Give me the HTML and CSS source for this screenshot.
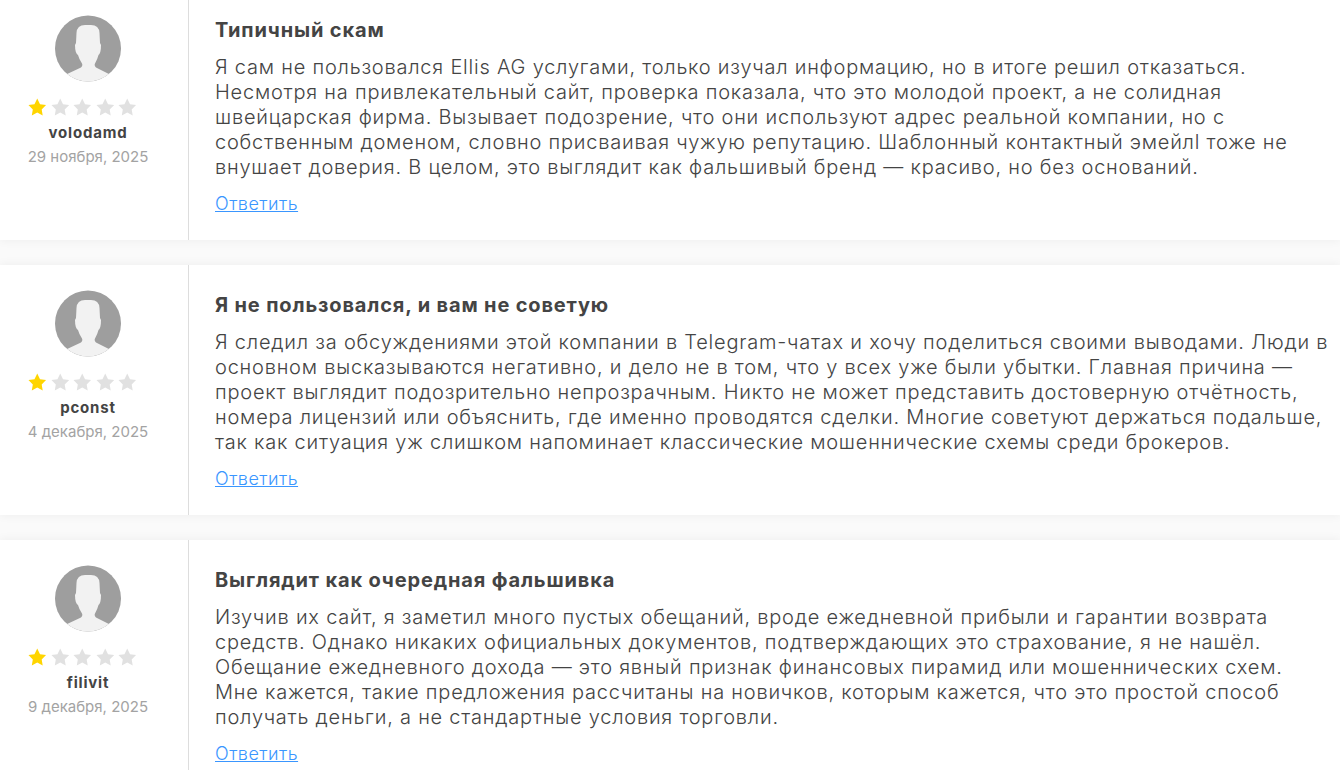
FILE: index.html
```html
<!DOCTYPE html>
<html lang="ru">
<head>
  <meta charset="UTF-8">
  <title>Отзывы</title>
  <link rel="stylesheet" href="styles.css">
</head>
<body>
  <svg class="svg-defs">
    <symbol id="avatar-shape" viewBox="0 0 66 67">
      <circle cx="33" cy="33.500" r="33" fill="#9e9e9e"/>
      <path fill="#f2f2f2" d="M12.100 59 L26 52.500 Q28 51 27 48.500 Q24 44 23 40 Q20 38 20 30 L21 28 L21.500 18 Q22 10 30 10 L36 10 Q44 10 44.500 18 L45 28 L46 30 Q46 38 43.500 40 Q42.500 44 40 48.500 Q39 51 41 52.500 L53.900 59 A33 33 0 0 1 12.100 59z"/>
    </symbol>
    <symbol id="star-shape" viewBox="0 0 20 20">
      <path d="M10 .5l3 6.300 6.500.9-4.700 4.600 1.100 6.700-5.900-3.200-5.900 3.200 1.100-6.700L.5 7.700 7 6.800z"/>
    </symbol>
  </svg>

  <section class="review">
    <div class="review-author">
      <svg class="avatar"><use href="#avatar-shape"/></svg>
      <div class="stars">
        <svg class="star star-on"><use href="#star-shape"/></svg>
        <svg class="star"><use href="#star-shape"/></svg>
        <svg class="star"><use href="#star-shape"/></svg>
        <svg class="star"><use href="#star-shape"/></svg>
        <svg class="star"><use href="#star-shape"/></svg>
      </div>
      <div class="author-name">volodamd</div>
      <div class="review-date">29 ноября, 2025</div>
    </div>
    <div class="review-body">
      <h3>Типичный скам</h3>
      <p>Я сам не пользовался Ellis AG услугами, только изучал информацию, но в итоге решил отказаться.<br>Несмотря на привлекательный сайт, проверка показала, что это молодой проект, а не солидная<br>швейцарская фирма. Вызывает подозрение, что они используют адрес реальной компании, но с<br>собственным доменом, словно присваивая чужую репутацию. Шаблонный контактный эмейлl тоже не<br>внушает доверия. В целом, это выглядит как фальшивый бренд — красиво, но без оснований.</p>
      <a href="#">Ответить</a>
    </div>
  </section>

  <section class="review">
    <div class="review-author">
      <svg class="avatar"><use href="#avatar-shape"/></svg>
      <div class="stars">
        <svg class="star star-on"><use href="#star-shape"/></svg>
        <svg class="star"><use href="#star-shape"/></svg>
        <svg class="star"><use href="#star-shape"/></svg>
        <svg class="star"><use href="#star-shape"/></svg>
        <svg class="star"><use href="#star-shape"/></svg>
      </div>
      <div class="author-name">pconst</div>
      <div class="review-date">4 декабря, 2025</div>
    </div>
    <div class="review-body">
      <h3>Я не пользовался, и вам не советую</h3>
      <p>Я следил за обсуждениями этой компании в Telegram-чатах и хочу поделиться своими выводами. Люди в<br>основном высказываются негативно, и дело не в том, что у всех уже были убытки. Главная причина —<br>проект выглядит подозрительно непрозрачным. Никто не может представить достоверную отчётность,<br>номера лицензий или объяснить, где именно проводятся сделки. Многие советуют держаться подальше,<br>так как ситуация уж слишком напоминает классические мошеннические схемы среди брокеров.</p>
      <a href="#">Ответить</a>
    </div>
  </section>

  <section class="review">
    <div class="review-author">
      <svg class="avatar"><use href="#avatar-shape"/></svg>
      <div class="stars">
        <svg class="star star-on"><use href="#star-shape"/></svg>
        <svg class="star"><use href="#star-shape"/></svg>
        <svg class="star"><use href="#star-shape"/></svg>
        <svg class="star"><use href="#star-shape"/></svg>
        <svg class="star"><use href="#star-shape"/></svg>
      </div>
      <div class="author-name">filivit</div>
      <div class="review-date">9 декабря, 2025</div>
    </div>
    <div class="review-body">
      <h3>Выглядит как очередная фальшивка</h3>
      <p>Изучив их сайт, я заметил много пустых обещаний, вроде ежедневной прибыли и гарантии возврата<br>средств. Однако никаких официальных документов, подтверждающих это страхование, я не нашёл.<br>Обещание ежедневного дохода — это явный признак финансовых пирамид или мошеннических схем.<br>Мне кажется, такие предложения рассчитаны на новичков, которым кажется, что это простой способ<br>получать деньги, а не стандартные условия торговли.</p>
      <a href="#">Ответить</a>
    </div>
  </section>
</body>
</html>
```

FILE: styles.css
```css
* {
  margin: 0;
  padding: 0;
  box-sizing: border-box;
}

html, body {
  height: 770px;
  overflow: hidden;
}

body {
  font-family: 'Inter', 'Noto Sans', sans-serif;
  background: #fafafa;
  color: #444;
}

.review {
  display: flex;
  height: 250px;
  margin-bottom: 25px;
  background: #fff;
  box-shadow: 0 0 10px rgba(0, 0, 0, 0.06);
}

.review:first-of-type {
  height: 240px;
}

.review-author {
  width: 189px;
  flex-shrink: 0;
  border-right: 1px solid #ddd;
  padding: 25px 12px 0 0;
  display: flex;
  flex-direction: column;
  align-items: center;
}

.review:first-of-type .review-author {
  padding-top: 15px;
}

.avatar {
  width: 66px;
  height: 67px;
  display: block;
}

.stars {
  display: flex;
  gap: 4px;
  margin-top: 16px;
  padding-right: 11px;
}

.star {
  width: 18.500px;
  height: 18.500px;
  fill: #e1e1e1;
}

.star-on {
  fill: #ffd500;
}

.author-name {
  font-size: 15px;
  font-weight: 700;
  letter-spacing: 0.800px;
  line-height: 20px;
  margin-top: 6px;
}

.review-date {
  font-size: 15px;
  line-height: 20px;
  margin-top: 4px;
  color: #a3a3a3;
}

.review-body {
  flex: 1;
  padding: 28px 0 0 26px;
}

.review:first-of-type .review-body {
  padding-top: 18px;
}

h3 {
  font-size: 20px;
  font-weight: 700;
  letter-spacing: 0.850px;
  line-height: 25px;
  margin-bottom: 12px;
}

p {
  font-size: 20px;
  font-weight: 300;
  letter-spacing: 0.780px;
  line-height: 25px;
  white-space: nowrap;
}

a {
  display: inline-block;
  margin-top: 11px;
  font-size: 18px;
  font-weight: 300;
  letter-spacing: 0.500px;
  line-height: 25px;
  color: #3a96ff;
}

.svg-defs {
  display: none;
}
```
